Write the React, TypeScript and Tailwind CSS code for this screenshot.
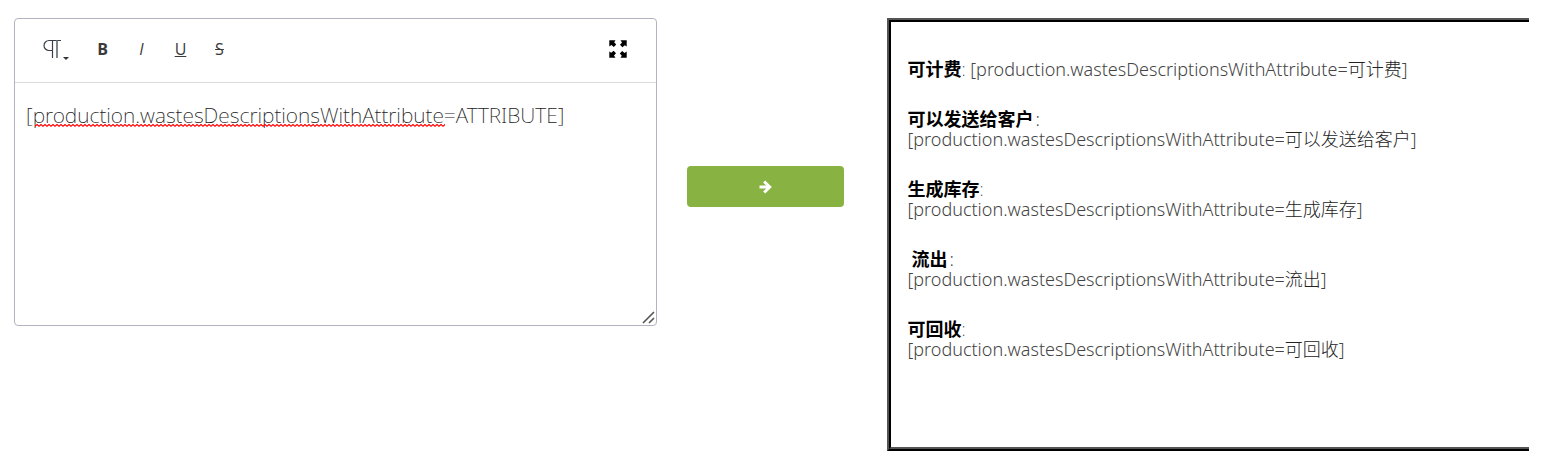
import React from "react";

const PREFIX = "[production.wastesDescriptionsWithAttribute=";

const attributes = [
  { label: "可计费", inline: true },
  { label: "可以发送给客户", spaced: true },
  { label: "生成库存" },
  { label: "流出", spaced: true, indent: true },
  { label: "可回收" },
];

function Pilcrow() {
  return (
    <svg width="28" height="22" viewBox="0 0 28 22" fill="none" aria-hidden="true">
      <path d="M18 2.5H6a5 5 0 0 0 0 10H9.5M9.5 2.5V20" stroke="#3a3f48" strokeWidth="1.2" />
      <path d="M14 2.5V20" stroke="#80858d" strokeWidth="2" />
      <path d="M20 19h6l-3 3z" fill="#333" />
    </svg>
  );
}

function Expand() {
  return (
    <svg width="18" height="18" viewBox="0 0 18 18" fill="#000" aria-hidden="true">
      {["", "rotate(90 9 9)", "rotate(180 9 9)", "rotate(270 9 9)"].map((t) => (
        <path key={t} transform={t || undefined} d="M0.3 0.3H6.5L5.2 2.2L7.2 4.6L4.8 7L2.4 5L0.3 6.5Z" />
      ))}
    </svg>
  );
}

function Editor() {
  return (
    <section className="relative flex h-[308px] min-w-0 flex-col overflow-hidden rounded border border-[#b4b4c0] bg-white">
      <div className="flex h-16 shrink-0 items-center border-b border-[#d9d9de] pr-[29px] pb-1 pl-6 font-['Open_Sans','Noto_Sans',sans-serif] text-base text-[#3a3a3a]">
        <button type="button" aria-label="Paragraph format" className="flex w-11 pl-1">
          <Pilcrow />
        </button>
        <button type="button" aria-label="Bold" className="w-[39px] text-center font-bold">B</button>
        <button type="button" aria-label="Italic" className="w-[39px] text-center italic">I</button>
        <button type="button" aria-label="Underline" className="w-[39px] text-center underline">U</button>
        <button type="button" aria-label="Strikethrough" className="w-[39px] text-center line-through">S</button>
        <button type="button" aria-label="Full screen" className="ml-auto">
          <Expand />
        </button>
      </div>
      <div className="relative flex flex-1">
        <textarea
          aria-label="Template text"
          spellCheck={false}
          defaultValue={PREFIX + "ATTRIBUTE]"}
          className="flex-1 resize-none bg-transparent px-[11px] py-[18px] font-['Noto_Sans','Noto_Sans_CJK_SC',sans-serif] text-[21px] leading-7 font-extralight text-[#222] outline-none"
        />
        <svg className="pointer-events-none absolute top-[41px] left-5 h-[3px] w-[410px]" aria-hidden="true">
          <defs>
            <pattern id="wave" width="4" height="3" patternUnits="userSpaceOnUse">
              <path d="M-1 3L2 0.5L5 3" fill="none" stroke="#f00" strokeWidth="1.2" />
            </pattern>
          </defs>
          <rect width="100%" height="3" fill="url(#wave)" />
        </svg>
      </div>
      <svg className="pointer-events-none absolute right-px bottom-px" width="13" height="13" viewBox="0 0 13 13" fill="none" stroke="#555" strokeWidth="1.6" aria-hidden="true">
        <path d="M1 12L12 1M7 12L12 7" />
      </svg>
    </section>
  );
}

function Result() {
  return (
    <section className="min-w-0 border-4 border-r-0 border-black bg-white px-[17px] pt-[37px] pb-[88px] font-['Noto_Sans','Noto_Sans_CJK_SC',sans-serif] text-lg leading-5 font-light text-[#444] [border-style:ridge]">
      <div className="flex flex-col gap-[30px]">
        {attributes.map(({ label, inline, spaced, indent }) => (
          <p key={label}>
            <strong className={indent ? "ml-1 font-bold text-black" : "font-bold text-black"}>{label}</strong>
            <span className={spaced ? "ml-0.5" : "font-extralight"}>:</span>
            {inline ? " " : <br />}
            {PREFIX}
            <span className="text-[#222]">{label}</span>]
          </p>
        ))}
      </div>
    </section>
  );
}

export default function App() {
  return (
    <main className="grid grid-cols-[1fr_230px_1fr] items-start bg-white pt-[18px] pr-[13px] pl-[14px]">
      <Editor />
      <button
        type="button"
        aria-label="Convert"
        className="mt-[148px] mr-[43px] ml-[30px] flex h-[41px] items-center justify-center rounded bg-[#88b343] text-white"
      >
        <svg width="13" height="14" viewBox="0 0 13 14" fill="none" stroke="currentColor" strokeWidth="3" aria-hidden="true">
          <path d="M0.5 7H10.5M5.2 1.5L10.7 7L5.2 12.5" />
        </svg>
      </button>
      <Result />
    </main>
  );
}
